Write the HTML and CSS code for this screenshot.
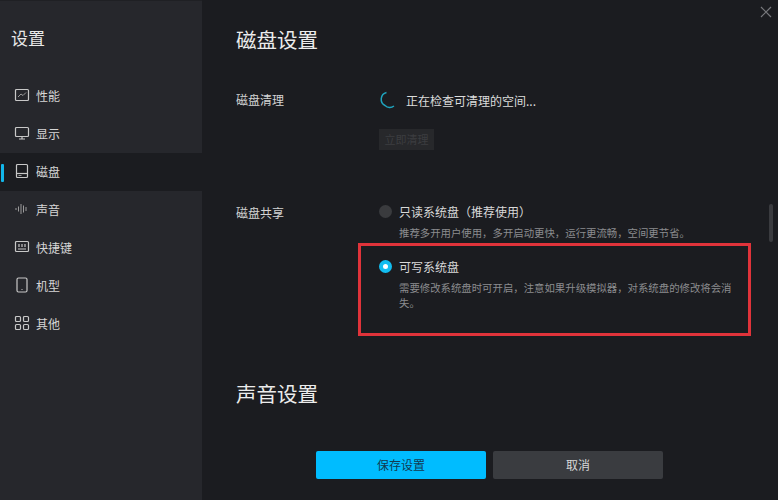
FILE: index.html
```html
<!DOCTYPE html>
<html lang="zh-CN">
<head>
	<meta charset="UTF-8">
	<title>设置</title>
	<link rel="stylesheet" href="styles.css">
</head>
<body>
<div class="win">
	<div class="side">
		<h2 class="side_title">设置</h2>
		<ul class="nav">
			<li><svg width="16" height="16" viewBox="0 0 16 16"><rect x="1.5" y="2.5" width="13" height="11" rx="1"/><path class="thin" d="M4 10l3-3 2 1.5 3-3"/></svg>性能</li>
			<li><svg width="16" height="16" viewBox="0 0 16 16"><rect x="1.5" y="2.5" width="13" height="9" rx="1"/><path d="M8 11.5v2M5 14h6"/></svg>显示</li>
			<li class="active"><svg width="16" height="16" viewBox="0 0 16 16"><rect x="2.5" y="1.5" width="11" height="13" rx="1"/><path d="M2.5 10.5h11"/><path class="thin" d="M4.5 12.5h3"/></svg>磁盘</li>
			<li><svg width="16" height="16" viewBox="0 0 16 16"><path class="thin" d="M2 7v2M4.5 5.5v5M7 3v10M9.5 4.5v7M12 6v4"/></svg>声音</li>
			<li><svg width="16" height="16" viewBox="0 0 16 16"><rect x="1.5" y="2.5" width="13" height="10" rx="1"/><path d="M5 5v3M8 5v3M11 5v3M4 10h8"/></svg>快捷键</li>
			<li><svg width="16" height="16" viewBox="0 0 16 16"><rect x="3" y="1" width="10" height="14" rx="1.5"/><path d="M7.5 12.5h1"/></svg>机型</li>
			<li><svg width="16" height="16" viewBox="0 0 16 16"><rect x="1.5" y="1.5" width="5" height="5" rx="1"/><rect x="9.5" y="1.5" width="5" height="5" rx="1"/><rect x="1.5" y="9.5" width="5" height="5" rx="1"/><rect x="9.5" y="9.5" width="5" height="5" rx="1"/></svg>其他</li>
		</ul>
	</div>

	<div class="main">
		<svg class="close" width="12" height="12" viewBox="0 0 12 12"><path d="M1 1l10 10M11 1L1 11"/></svg>
		<h1 class="main_title">磁盘设置</h1>

		<div class="row clean_row">
			<div class="label">磁盘清理</div>
			<div class="cont">
				<div class="checking">
					<svg width="18" height="18" viewBox="0 0 18 18"><path d="M7.5 1.5A7 7 0 0 0 6 14.5 7 7 0 0 0 15 15"/></svg>
					正在检查可清理的空间...
				</div>
				<div class="btn_clean">立即清理</div>
			</div>
		</div>

		<div class="row share_row">
			<div class="label">磁盘共享</div>
			<div class="cont">
				<div class="opt">
					<span class="radio"></span>
					<div>
						<div class="opt_name">只读系统盘（推荐使用）</div>
						<div class="opt_desc">推荐多开用户使用，多开启动更快，运行更流畅，空间更节省。</div>
					</div>
				</div>
				<div class="opt opt_write">
					<span class="radio on"></span>
					<div>
						<div class="opt_name">可写系统盘</div>
						<div class="opt_desc">需要修改系统盘时可开启，注意如果升级模拟器，对系统盘的修改将会消失。</div>
					</div>
					<div class="red_box"></div>
				</div>
			</div>
		</div>

		<h1 class="main_title sound_title">声音设置</h1>

		<div class="btns">
			<div class="btn save">保存设置</div>
			<div class="btn cancel">取消</div>
		</div>
		<div class="scroll"></div>
	</div>
</div>
</body>
</html>
```

FILE: styles.css
```css
*{
	margin: 0;
	padding: 0;
	box-sizing: border-box;
}
li{
	list-style: none;
}
body{
	width: 778px;
	height: 500px;
	overflow: hidden;
	background: #1b1c20;
	font-family: "Noto Sans CJK SC", "Liberation Sans", sans-serif;
}
.win{
	display: flex;
	height: 500px;
}

.side{
	width: 202px;
	height: 500px;
	background: #26272c;
	flex-shrink: 0;
	box-shadow: inset 0 1px 0 #1f2024;
}
.side_title{
	font-size: 17px;
	font-weight: 400;
	line-height: 26px;
	color: #e8e8e8;
	padding: 25px 0 0 11px;
}
.nav{
	margin-top: 26px;
}
.nav li{
	height: 38px;
	display: flex;
	align-items: center;
	padding: 0 0 2px 14px;
	font-size: 12px;
	color: #d6d6d6;
	position: relative;
}
.nav li svg{
	margin-right: 6px;
}
.nav svg *{
	fill: none;
	stroke: #c8c8c8;
	stroke-width: 1.2;
}
.nav svg .thin{
	stroke: #9a9a9a;
	stroke-width: 1;
}
.nav .active{
	background: #1b1c20;
}
.nav .active:before{
	content: "";
	position: absolute;
	left: 1px;
	top: 11px;
	width: 3px;
	height: 18px;
	background: #12b6ea;
	border-radius: 1px;
}

.main{
	flex: 1;
	position: relative;
	padding-left: 34px;
}
.close{
	position: absolute;
	right: 6px;
	top: 6px;
}
.close path{
	stroke: #77787c;
	stroke-width: 1.2;
	fill: none;
}
.main_title{
	font-size: 20.5px;
	font-weight: 400;
	line-height: 32px;
	color: #ececec;
	padding-top: 23px;
	height: 56px;
}
.row{
	display: flex;
	font-size: 12px;
}
.label{
	width: 143px;
	color: #d4d4d4;
	line-height: 18px;
	flex-shrink: 0;
}
.clean_row{
	margin-top: 35px;
}
.checking{
	display: flex;
	align-items: center;
	height: 20px;
	margin-top: -1px;
	color: #dcdcdc;
}
.checking svg{
	margin-right: 9px;
}
.checking path{
	fill: none;
	stroke: #1fa3bd;
	stroke-width: 1.5;
}
.btn_clean{
	width: 55px;
	height: 21px;
	margin-top: 19px;
	background: #27282b;
	color: #3c3d40;
	font-size: 11px;
	line-height: 21px;
	text-align: center;
}
.share_row{
	margin-top: 54px;
}
.opt{
	display: flex;
	width: 360px;
	position: relative;
}
.opt_write{
	margin-top: 19px;
}
.radio{
	width: 13px;
	height: 13px;
	border-radius: 50%;
	background: #3a3b3e;
	margin: 1px 7px 0 0;
	flex-shrink: 0;
}
.radio.on{
	background: #fff;
	border: 4px solid #12bdf0;
}
.opt_name{
	color: #d8d8d8;
	line-height: 16px;
}
.opt_desc{
	font-size: 10.4px;
	line-height: 15px;
	color: #8b8c8f;
	margin-top: 5px;
}
.red_box{
	position: absolute;
	left: -21px;
	top: -16px;
	width: 393px;
	height: 93px;
	border: 3px solid #e0333a;
}
.sound_title{
	margin-top: 67px;
	padding-top: 0;
	height: 32px;
}
.btns{
	display: flex;
	gap: 7px;
	margin: 42px 0 0 80px;
}
.btn{
	width: 170px;
	height: 28px;
	border-radius: 2px;
	font-size: 12px;
	line-height: 28px;
	text-align: center;
}
.save{
	background: #00bcff;
	color: #123a52;
}
.cancel{
	background: #3a3c40;
	color: #d8d8d8;
}
.scroll{
	position: absolute;
	left: 567px;
	top: 204px;
	width: 4px;
	height: 38px;
	border-radius: 2px;
	background: #3a3b3f;
}
```
